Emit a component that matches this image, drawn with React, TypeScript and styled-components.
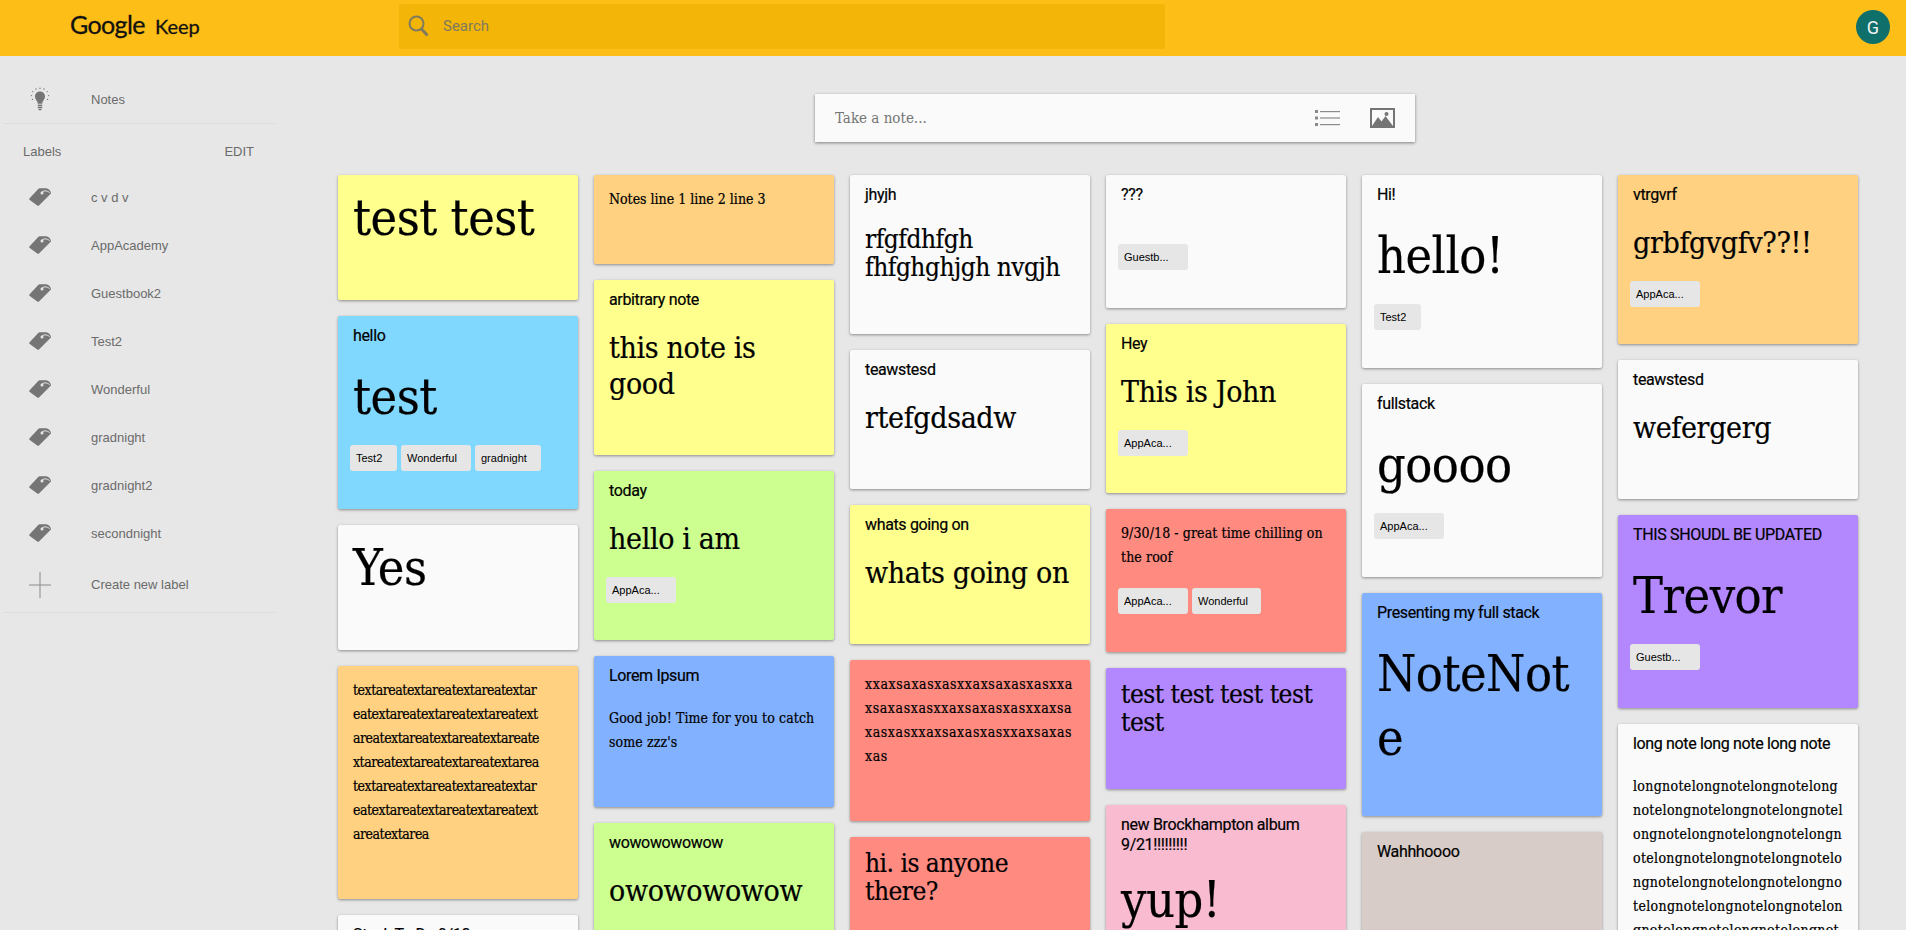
import React from "react";
import styled, { createGlobalStyle } from "styled-components";

const GlobalStyle = createGlobalStyle`
  html, body {
    margin: 0;
    padding: 0;
    height: 100%;
    overflow: hidden;
    background: #e7e7e7;
    font-family: "Liberation Sans", Arial, sans-serif;
  }
`;

const colors = {
  white: "#fafafa",
  yellow: "#ffff8d",
  sky: "#80d8ff",
  orange: "#ffd180",
  green: "#ccff90",
  blue: "#82b1ff",
  red: "#ff8a80",
  purple: "#b388ff",
  pink: "#f8bbd0",
  beige: "#d7ccc8",
};

const Page = styled.div`
  height: 100vh;
  overflow: hidden;
  display: flex;
  flex-direction: column;
`;

const Header = styled.header`
  flex: none;
  height: 56px;
  background: #fdbe17;
  display: flex;
  align-items: center;
  padding: 0 16px 0 70px;
`;

const Logo = styled.div`
  width: 329px;
  flex: none;
  display: flex;
  align-items: baseline;
  gap: 10px;
  padding-bottom: 9px;
  color: #111;
  font-family: Lato, sans-serif;
  -webkit-text-stroke: 0.3px #111;
`;

const LogoGoogle = styled.span`
  font-size: 25px;
  letter-spacing: -0.6px;
`;

const LogoKeep = styled.span`
  font-size: 20px;
`;

const SearchBar = styled.div`
  width: 766px;
  height: 45px;
  margin-bottom: 3px;
  border-radius: 3px;
  background: #f2b508;
  display: flex;
  align-items: center;
  gap: 14px;
  padding: 0 0 2px 9px;
  box-sizing: border-box;
  color: #807a5e;
  font: 15px Roboto, sans-serif;
`;

const Avatar = styled.div`
  margin-left: auto;
  width: 34px;
  height: 34px;
  margin-bottom: 2px;
  border-radius: 50%;
  background: #0f706b;
  color: #f4f4f4;
  display: flex;
  align-items: center;
  justify-content: center;
  font: 18px Roboto, sans-serif;
`;

const Body = styled.div`
  flex: 1;
  display: flex;
  min-height: 0;
`;

const Sidebar = styled.nav`
  flex: none;
  width: 338px;
  box-sizing: border-box;
  padding: 19px 63px 0 4px;
  color: #6b6b6b;
  font-size: 13px;
`;

const NavRow = styled.div<{ $h?: number }>`
  height: ${(p) => p.$h ?? 48}px;
  display: flex;
  align-items: center;
`;

const NavIcon = styled.span`
  width: 87px;
  padding-left: 25px;
  box-sizing: border-box;
  flex: none;
  display: flex;
`;

const Divider = styled.div`
  height: 1px;
  background: #dcdcdc;
`;

const LabelsHead = styled.div`
  height: 46px;
  box-sizing: border-box;
  display: flex;
  align-items: center;
  justify-content: space-between;
  padding: 8px 21px 0 19px;
`;

const Labels = styled.div`
  padding-top: 3px;
`;

const Main = styled.main`
  flex: 1;
  min-width: 0;
`;

const NoteBar = styled.div`
  width: 600px;
  height: 48px;
  box-sizing: border-box;
  margin: 38px 0 33px 477px;
  padding: 0 20px;
  background: #fafafa;
  box-shadow: 0 1px 3px rgba(0, 0, 0, 0.45);
  display: flex;
  align-items: center;
  color: #757575;
  font: 15px "DejaVu Serif Condensed", "DejaVu Serif", serif;
`;

const NoteBarText = styled.span`
  flex: 1;
`;

const NoteBarIcons = styled.div`
  display: flex;
  align-items: center;
  gap: 30px;
`;

const Board = styled.div`
  display: flex;
  gap: 16px;
  align-items: flex-start;
`;

const Column = styled.div`
  width: 240px;
  display: flex;
  flex-direction: column;
  gap: 16px;
`;

const Card = styled.article<{ $bg: string; $h: number }>`
  flex: none;
  height: ${(p) => p.$h}px;
  box-sizing: border-box;
  padding: 10px 15px 0;
  display: flex;
  flex-direction: column;
  background: ${(p) => p.$bg};
  border-radius: 2px;
  box-shadow: 0 1px 3px rgba(0, 0, 0, 0.4);
  overflow: hidden;
`;

const Title = styled.h3`
  margin: 0 0 18px;
  font: 400 16px/20px Roboto, sans-serif;
  letter-spacing: -0.35px;
  color: #000;
  -webkit-text-stroke: 0.2px #000;
`;

const Text = styled.p<{ $size: number; $lh: number; $sp: number; $dy: number; $db: number }>`
  margin: ${(p) => p.$dy}px 0 ${(p) => p.$db}px;
  white-space: pre;
  color: #000;
  font-family: "DejaVu Serif Condensed", "DejaVu Serif", serif;
  font-size: ${(p) => p.$size}px;
  line-height: ${(p) => p.$lh}px;
  letter-spacing: ${(p) => p.$sp}px;
  -webkit-text-stroke: 0.2px #000;
`;

const Chips = styled.div`
  display: flex;
  gap: 4px;
  margin: 16px 0 0 -3px;
`;

const Chip = styled.span<{ $w: number }>`
  width: ${(p) => p.$w}px;
  height: 26px;
  box-sizing: border-box;
  padding-left: 6px;
  border-radius: 3px;
  background: #e6e6e6;
  font: 11px/26px "Liberation Sans", Arial, sans-serif;
  color: #000;
`;

type Note = {
  h: number;
  bg: string;
  title?: string;
  text: string;
  size?: "s" | "m" | "l" | "xl";
  sp?: number;
  dy?: number;
  chips?: [string, number][];
};

const sizes = {
  s: { size: 14, lh: 24, sp: 0.1, dy: 2, db: 3 },
  m: { size: 26, lh: 28, sp: -0.5, dy: 2, db: 0 },
  l: { size: 30, lh: 36, sp: -0.35, dy: 2, db: 4 },
  xl: { size: 50, lh: 64, sp: -0.5, dy: 1, db: 0 },
};

const app: [string, number] = ["AppAca...", 70];
const guest: [string, number] = ["Guestb...", 70];
const test2: [string, number] = ["Test2", 47];

const columns: Note[][] = [
  [
    { h: 125, bg: colors.yellow, text: "test test", size: "xl" },
    { h: 193, bg: colors.sky, title: "hello", text: "test", size: "xl", chips: [test2, ["Wonderful", 70], ["gradnight", 66]] },
    { h: 125, bg: colors.white, text: "Yes", size: "xl" },
    {
      h: 233,
      bg: colors.orange,
      sp: -0.48,
      text: "textareatextareatextareatextar\neatextareatextareatextareatext\nareatextareatextareatextareate\nxtareatextareatextareatextarea\ntextareatextareatextareatextar\neatextareatextareatextareatext\nareatextarea",
    },
    { h: 120, bg: colors.white, title: "Stuck To Do 9/10", text: "" },
  ],
  [
    { h: 89, bg: colors.orange, sp: 0, text: "Notes line 1 line 2 line 3" },
    { h: 175, bg: colors.yellow, title: "arbitrary note", text: "this note is\ngood", size: "l" },
    { h: 169, bg: colors.green, title: "today", text: "hello i am", size: "l", chips: [app] },
    { h: 151, bg: colors.blue, title: "Lorem Ipsum", text: "Good job! Time for you to catch\nsome zzz's" },
    { h: 160, bg: colors.green, title: "wowowowowow", text: "owowowowow", size: "l" },
  ],
  [
    { h: 159, bg: colors.white, title: "jhyjh", text: "rfgfdhfgh\nfhfghghjgh nvgjh", size: "m" },
    { h: 139, bg: colors.white, title: "teawstesd", text: "rtefgdsadw", size: "l" },
    { h: 139, bg: colors.yellow, title: "whats going on", text: "whats going on", size: "l" },
    { h: 161, bg: colors.red, sp: 0.6, text: "xxaxsaxasxasxxaxsaxasxasxxa\nxsaxasxasxxaxsaxasxasxxaxsa\nxasxasxxaxsaxasxasxxaxsaxas\nxas" },
    { h: 120, bg: colors.red, text: "hi. is anyone\nthere?", size: "m" },
  ],
  [
    { h: 133, bg: colors.white, title: "???", text: "", chips: [guest] },
    { h: 169, bg: colors.yellow, title: "Hey", text: "This is John", size: "l", chips: [app] },
    { h: 143, bg: colors.red, text: "9/30/18 - great time chilling on\nthe roof", chips: [app, ["Wonderful", 69]] },
    { h: 121, bg: colors.purple, text: "test test test test\ntest", size: "m" },
    { h: 160, bg: colors.pink, title: "new Brockhampton album\n9/21!!!!!!!!!", text: "yup!", size: "xl", dy: -5 },
  ],
  [
    { h: 193, bg: colors.white, title: "Hi!", text: "hello!", size: "xl", chips: [test2] },
    { h: 193, bg: colors.white, title: "fullstack", text: "goooo", size: "xl", chips: [app] },
    { h: 223, bg: colors.blue, title: "Presenting my full stack", text: "NoteNot\ne", size: "xl" },
    { h: 120, bg: colors.beige, title: "Wahhhoooo", text: "" },
  ],
  [
    { h: 169, bg: colors.orange, title: "vtrgvrf", text: "grbfgvgfv??!!", size: "l", chips: [app] },
    { h: 139, bg: colors.white, title: "teawstesd", text: "wefergerg", size: "l" },
    { h: 193, bg: colors.purple, title: "THIS SHOUDL BE UPDATED", text: "Trevor", size: "xl", chips: [guest] },
    {
      h: 300,
      bg: colors.white,
      sp: 0.33,
      title: "long note long note long note",
      text: "longnotelongnotelongnotelong\nnotelongnotelongnotelongnotel\nongnotelongnotelongnotelongn\notelongnotelongnotelongnotelo\nngnotelongnotelongnotelongno\ntelongnotelongnotelongnotelon\ngnotelongnotelongnotelongnot",
    },
  ],
];

const labels = ["c v d v", "AppAcademy", "Guestbook2", "Test2", "Wonderful", "gradnight", "gradnight2", "secondnight"];

const BulbIcon = () => (
  <svg width="22" height="26" viewBox="0 0 22 26" fill="#757575">
    <path d="M11 5.5c-3 0-5 2.2-5 5 0 2.2 1.4 3.5 2.2 5 .4.8.5 1.5.6 2.3h4.4c.1-.8.2-1.5.6-2.3.8-1.5 2.2-2.8 2.2-5 0-2.8-2-5-5-5z" />
    <rect x="8.8" y="18.6" width="4.4" height="1.5" />
    <rect x="8.8" y="20.7" width="4.4" height="1.5" />
    <rect x="9.6" y="22.8" width="2.8" height="1.4" />
    <g>
      <circle cx="11" cy="2.2" r=".7" />
      <circle cx="7" cy="3" r=".7" />
      <circle cx="15" cy="3" r=".7" />
      <circle cx="3.8" cy="5.6" r=".7" />
      <circle cx="18.2" cy="5.6" r=".7" />
      <circle cx="2.4" cy="9.6" r=".7" />
      <circle cx="19.6" cy="9.6" r=".7" />
      <circle cx="3.4" cy="13.4" r=".7" />
      <circle cx="18.6" cy="13.4" r=".7" />
    </g>
  </svg>
);

const TagIcon = () => (
  <svg width="22" height="18" viewBox="0 0 22 18">
    <path d="M.6 10.3 9 1.2C9.7.4 10.4.2 11.3.2L17 .3c2.6.4 4.4 2 4.9 4.4.1.6-.2 1-.7 1.5L10.2 17.2c-.6.7-1.3.8-2 .2L.8 12.1c-.6-.5-.7-1.2-.2-1.8z" fill="#757575" />
    <path d="M12 4.8c2-2.4 5.8-2.6 8.6-.2" fill="none" stroke="#e6e6e6" strokeWidth="1" />
    <circle cx="13" cy="5" r="1.5" fill="#e6e6e6" />
  </svg>
);

const PlusIcon = () => (
  <svg width="22" height="26" viewBox="0 0 22 26" stroke="#8a8a8a" strokeWidth="1">
    <path d="M0 13h22M11 0v26" />
  </svg>
);

const SearchIcon = () => (
  <svg width="21" height="22" viewBox="0 0 21 22" fill="none" stroke="#807a5e">
    <circle cx="8.5" cy="8.5" r="7" strokeWidth="2" />
    <path d="M13.5 14l6 6.5" strokeWidth="3" />
  </svg>
);

const ListIcon = () => (
  <svg width="25" height="18" viewBox="0 0 25 18" fill="#8a8a8a">
    <rect x="0" y="1" width="3" height="3" />
    <rect x="0" y="7.5" width="3" height="3" />
    <rect x="0" y="14" width="3" height="3" />
    <rect x="5" y="2" width="20" height="1.2" />
    <rect x="5" y="8.4" width="20" height="1.2" />
    <rect x="5" y="15" width="20" height="1.2" />
  </svg>
);

const ImageIcon = () => (
  <svg width="25" height="20" viewBox="0 0 25 20">
    <path fill="#757575" fillRule="evenodd" d="M0 0h25v20H0zM2 2v16h21V2z" />
    <path fill="#757575" d="M2 18l6-9 3.5 4.5 4-5.5L23 18z" />
    <circle cx="16.5" cy="6" r="2" fill="#757575" />
  </svg>
);

export default function App() {
  return (
    <Page>
      <GlobalStyle />
      <Header>
        <Logo>
          <LogoGoogle>Google</LogoGoogle>
          <LogoKeep>Keep</LogoKeep>
        </Logo>
        <SearchBar>
          <SearchIcon />
          Search
        </SearchBar>
        <Avatar>G</Avatar>
      </Header>
      <Body>
        <Sidebar>
          <NavRow>
            <NavIcon><BulbIcon /></NavIcon>
            Notes
          </NavRow>
          <Divider />
          <LabelsHead>
            <span>Labels</span>
            <span>EDIT</span>
          </LabelsHead>
          <Labels>
            {labels.map((l) => (
              <NavRow key={l}>
                <NavIcon><TagIcon /></NavIcon>
                {l}
              </NavRow>
            ))}
            <NavRow $h={55}>
              <NavIcon><PlusIcon /></NavIcon>
              Create new label
            </NavRow>
          </Labels>
          <Divider />
        </Sidebar>
        <Main>
          <NoteBar>
            <NoteBarText>Take a note...</NoteBarText>
            <NoteBarIcons>
              <ListIcon />
              <ImageIcon />
            </NoteBarIcons>
          </NoteBar>
          <Board>
            {columns.map((col, i) => (
              <Column key={i}>
                {col.map((n, j) => {
                  const s = sizes[n.size ?? "s"];
                  return (
                    <Card key={j} $bg={n.bg} $h={n.h}>
                      {n.title && <Title>{n.title}</Title>}
                      <Text $size={s.size} $lh={s.lh} $sp={n.sp ?? s.sp} $dy={n.dy ?? s.dy} $db={s.db}>{n.text}</Text>
                      {n.chips && (
                        <Chips>
                          {n.chips.map(([c, w]) => (
                            <Chip key={c} $w={w}>{c}</Chip>
                          ))}
                        </Chips>
                      )}
                    </Card>
                  );
                })}
              </Column>
            ))}
          </Board>
        </Main>
      </Body>
    </Page>
  );
}
